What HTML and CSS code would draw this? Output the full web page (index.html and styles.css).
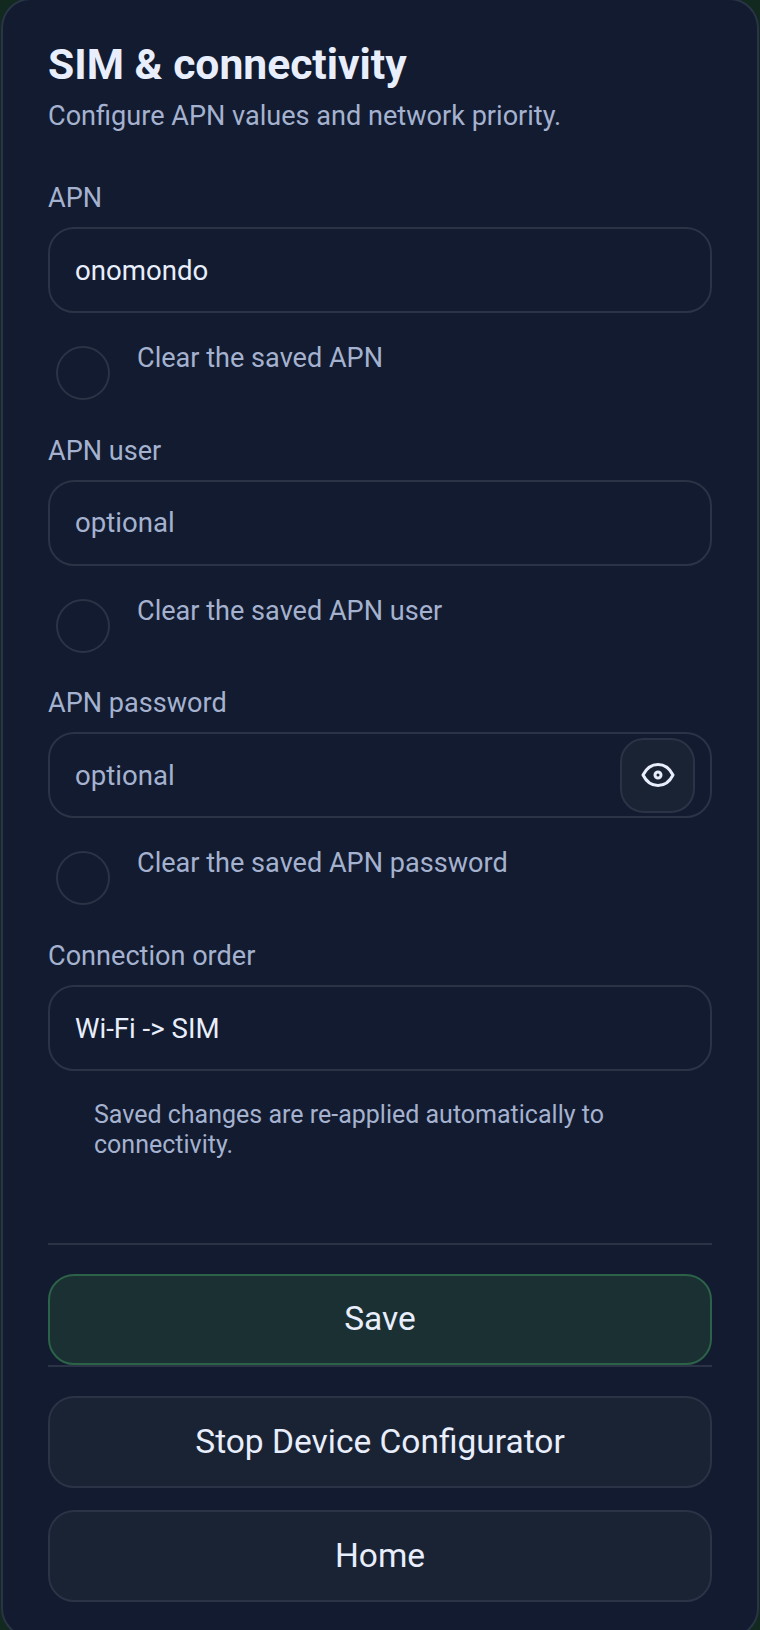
FILE: index.html
```html
<!DOCTYPE html>
<html lang="en">
<head>
<meta charset="utf-8">
<title>SIM &amp; connectivity</title>
<link rel="stylesheet" href="styles.css">
</head>
<body>
<main class="card">
  <h1 class="title">SIM &amp; connectivity</h1>
  <p class="subtitle">Configure APN values and network priority.</p>

  <div class="field">
    <div class="label">APN</div>
    <div class="input"><span class="value">onomondo</span></div>
    <div class="clear"><span class="radio"></span><span class="clear-text">Clear the saved APN</span></div>
  </div>

  <div class="field">
    <div class="label">APN user</div>
    <div class="input"><span class="placeholder">optional</span></div>
    <div class="clear"><span class="radio"></span><span class="clear-text">Clear the saved APN user</span></div>
  </div>

  <div class="field">
    <div class="label">APN password</div>
    <div class="input has-toggle">
      <span class="placeholder">optional</span>
      <span class="toggle">
        <svg class="eye" viewBox="0 0 24 24" fill="none" stroke="currentColor" stroke-width="2" stroke-linecap="round" stroke-linejoin="round"><path d="M2 12C4.200 7.600 7.800 5 12 5s7.800 2.600 10 7c-2.200 4.400-5.800 7-10 7S4.200 16.400 2 12Z"/><circle cx="12" cy="12" r="2"/></svg>
      </span>
    </div>
    <div class="clear"><span class="radio"></span><span class="clear-text">Clear the saved APN password</span></div>
  </div>

  <div class="field">
    <div class="label">Connection order</div>
    <div class="input"><span class="value">Wi-Fi -&gt; SIM</span></div>
  </div>

  <p class="hint">Saved changes are re-applied automatically to connectivity.</p>

  <div class="save-bar">
    <div class="btn btn-save">Save</div>
  </div>
  <div class="actions">
    <div class="btn">Stop Device Configurator</div>
    <div class="btn">Home</div>
  </div>
</main>
</body>
</html>
```

FILE: styles.css
```css
* { box-sizing: border-box; }
html, body { margin: 0; padding: 0; height: 1630px; overflow: hidden; }
body {
  background: #12291f;
  font-family: Roboto, "Noto Sans", sans-serif;
  color: #e8eefc;
}
.card {
  margin: -2px 1px 0 1px;
  height: 1640px;
  padding: 41px 45px 0 45px;
  background: #121b2f;
  border: 2px solid #2a3446;
  border-radius: 30px;
}
.title {
  margin: 0;
  font-size: 42.600px;
  line-height: 46px;
  font-weight: 700;
  color: #e8eefc;
}
.subtitle {
  margin: 11px 0 0;
  font-size: 27.100px;
  line-height: 36px;
  color: #a5b2cf;
}
.label {
  font-size: 27.100px;
  line-height: 36px;
  color: #a5b2cf;
}
.subtitle + .field { margin-top: 46px; }
.input {
  display: flex;
  align-items: center;
  justify-content: space-between;
  height: 86px;
  margin-top: 11px;
  padding: 0 0 0 25px;
  border: 2px solid #2a3446;
  border-radius: 26px;
  font-size: 27.600px;
}
.value { color: #e8eefc; }
.placeholder { color: #a5b2cf; }
.toggle {
  display: flex;
  align-items: center;
  justify-content: center;
  width: 75px;
  height: 75px;
  margin-right: 15px;
  background: #1a2334;
  border: 2px solid #2a3446;
  border-radius: 24px;
  color: #e8eefc;
}
.eye { width: 36px; height: 36px; }
.clear {
  display: flex;
  align-items: flex-start;
  height: 119.700px;
  padding: 33px 0 0 8px;
}
.radio {
  width: 54px;
  height: 54px;
  border: 2px solid #2a3446;
  border-radius: 50%;
  flex: none;
}
.clear-text {
  margin: -6px 0 0 27px;
  font-size: 27.100px;
  line-height: 36px;
  color: #a5b2cf;
}
.hint {
  margin: 29px 0 0;
  padding-left: 46px;
  font-size: 25px;
  line-height: 29.500px;
  color: #a5b2cf;
}
.save-bar {
  margin-top: 84px;
  padding: 29px 0 0;
  border-top: 2px solid #2a3446;
  border-bottom: 2px solid #2a3446;
}
.btn {
  display: flex;
  align-items: center;
  justify-content: center;
  height: 92px;
  padding-bottom: 2px;
  background: #1a2334;
  border: 2px solid #2a3446;
  border-radius: 26px;
  font-size: 33.500px;
  color: #e8eefc;
}
.btn-save {
  height: 91px;
  background: #1a3033;
  border-color: #2c6248;
}
.actions {
  display: flex;
  flex-direction: column;
  gap: 22px;
  margin-top: 29px;
}
```
